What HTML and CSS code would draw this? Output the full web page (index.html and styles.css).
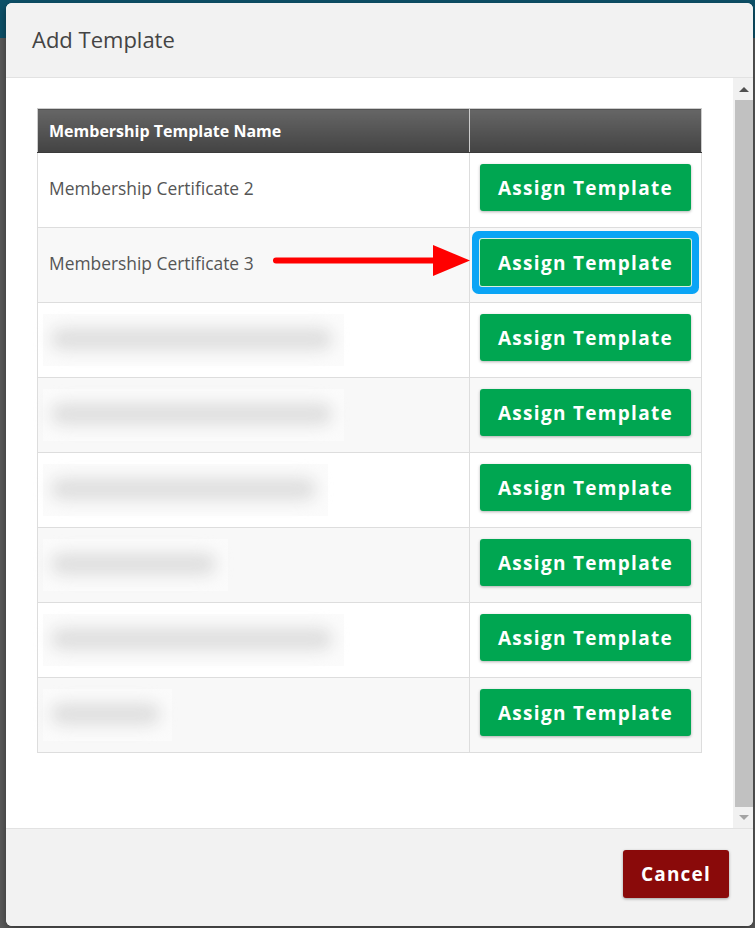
FILE: index.html
```html
<!DOCTYPE html>
<html lang="en">
<head>
    <meta charset="UTF-8">
    <meta name="viewport" content="width=device-width, initial-scale=1.0">
    <title>Add Template</title>
    <link rel="stylesheet" href="styles.css">
</head>
<body>
    <div class="modal">
        <div class="modal-header">
            <h2>Add Template</h2>
        </div>

        <div class="modal-body">
            <div class="modal-content">
                <div class="table-wrap">
                    <table class="template-table">
                        <thead>
                            <tr>
                                <th class="col-name">Membership Template Name</th>
                                <th class="col-action"></th>
                            </tr>
                        </thead>
                        <tbody>
                            <tr>
                                <td>Membership Certificate 2</td>
                                <td class="cell-action"><button class="btn-assign">Assign Template</button></td>
                            </tr>
                            <tr>
                                <td>Membership Certificate 3</td>
                                <td class="cell-action"><button class="btn-assign focused">Assign Template</button></td>
                            </tr>
                            <tr>
                                <td><span class="blurred w-long"><span class="blur-bar"></span></span></td>
                                <td class="cell-action"><button class="btn-assign">Assign Template</button></td>
                            </tr>
                            <tr>
                                <td><span class="blurred w-long"><span class="blur-bar"></span></span></td>
                                <td class="cell-action"><button class="btn-assign">Assign Template</button></td>
                            </tr>
                            <tr>
                                <td><span class="blurred w-mid"><span class="blur-bar"></span></span></td>
                                <td class="cell-action"><button class="btn-assign">Assign Template</button></td>
                            </tr>
                            <tr>
                                <td><span class="blurred w-short"><span class="blur-bar"></span></span></td>
                                <td class="cell-action"><button class="btn-assign">Assign Template</button></td>
                            </tr>
                            <tr>
                                <td><span class="blurred w-long"><span class="blur-bar"></span></span></td>
                                <td class="cell-action"><button class="btn-assign">Assign Template</button></td>
                            </tr>
                            <tr>
                                <td><span class="blurred w-tiny"><span class="blur-bar"></span></span></td>
                                <td class="cell-action"><button class="btn-assign">Assign Template</button></td>
                            </tr>
                        </tbody>
                    </table>

                    <!-- annotation arrow pointing at the focused button -->
                    <svg class="pointer-arrow" width="204" height="36" viewBox="0 0 204 36">
                        <line x1="7" y1="17.5" x2="168" y2="17.5" stroke="#ff0000" stroke-width="6" stroke-linecap="round"/>
                        <polygon points="164,2 201,17.5 164,33" fill="#ff0000"/>
                    </svg>
                </div>
            </div>

            <div class="scrollbar">
                <div class="scroll-btn"><span class="arrow-up"></span></div>
                <div class="scroll-thumb"></div>
                <div class="scroll-btn"><span class="arrow-down"></span></div>
            </div>
        </div>

        <div class="modal-footer">
            <button class="btn-cancel">Cancel</button>
        </div>
    </div>
</body>
</html>
```

FILE: styles.css
```css
:root {
    --backdrop: #5a5a5a;
    --nav: #0d5169;
    --panel: #f2f2f2;
    --line: #e2e2e2;
    --cell-line: #dddddd;
    --green: #00a651;
    --cancel: #8a0a0a;
    --text: #555555;
}

body {
    margin: 0;
    height: 928px;
    overflow: hidden;
    background: linear-gradient(var(--nav) 0, var(--nav) 38px, var(--backdrop) 38px);
    font-family: "Open Sans", "Liberation Sans", Arial, sans-serif;
}

.modal {
    width: 747px;
    height: 923px;
    margin: 3px 0 0 6px;
    background: #ffffff;
    border-radius: 6px;
    overflow: hidden;
    display: flex;
    flex-direction: column;
    box-shadow: 0 3px 8px rgba(0, 0, 0, 0.4);
}

.modal-header {
    height: 74px;
    background: var(--panel);
    border-bottom: 1px solid var(--line);
    display: flex;
    align-items: center;
    padding-left: 26px;
}

.modal-header h2 {
    margin: 0;
    font-size: 22px;
    font-weight: 400;
    color: #444444;
    position: relative;
    top: -1px;
}

.modal-body {
    height: 750px;
    display: flex;
    background: #ffffff;
}

.modal-content {
    flex: 1;
    padding: 30px 0 0 31px;
}

.table-wrap {
    position: relative;
    width: 665px;
}

.template-table {
    width: 665px;
    border-collapse: collapse;
    table-layout: fixed;
}

.template-table th {
    height: 44px;
    padding: 0 11px;
    text-align: left;
    color: #ffffff;
    font-size: 16px;
    font-weight: 700;
    background: linear-gradient(#666666, #434343);
    border: 1px solid #cccccc;
    border-bottom-color: #3a3a3a;
    box-sizing: border-box;
}

.template-table .col-name {
    width: 432px;
}

.template-table td {
    height: 75px;
    padding: 0 10px 4px 11px;
    border: 1px solid var(--cell-line);
    font-size: 17.4px;
    color: var(--text);
    box-sizing: border-box;
}

.template-table td.cell-action {
    padding: 11px 10px 0 10px;
    vertical-align: top;
}

.template-table tbody tr:nth-child(even) td {
    background: #f8f8f8;
}

.btn-assign {
    display: block;
    width: 211px;
    height: 47px;
    border: none;
    border-radius: 3px;
    background: var(--green);
    color: #ffffff;
    font-family: "Open Sans", "Liberation Sans", Arial, sans-serif;
    font-size: 19px;
    font-weight: 700;
    letter-spacing: 1.3px;
    box-shadow: 0 1px 3px rgba(0, 0, 0, 0.3);
    cursor: pointer;
}

.btn-assign.focused {
    box-shadow: 0 0 0 1px #d9efe0, 0 0 0 8px #0aa4f5;
    border-radius: 2px;
}

.blurred {
    display: block;
    height: 52px;
    margin: 4px 0 0 -6px;
    background: #fbfbfb;
    position: relative;
}

.blur-bar {
    display: block;
    position: absolute;
    left: 8px;
    right: 12px;
    top: 14px;
    height: 22px;
    background: #dedede;
    border-radius: 10px;
    filter: blur(8px);
}

.w-long { width: 301px; }
.w-mid { width: 285px; }
.w-short { width: 185px; }
.w-tiny { width: 129px; }

.pointer-arrow {
    position: absolute;
    left: 232px;
    top: 135px;
}

.scrollbar {
    width: 20px;
    background: #f1f1f1;
    display: flex;
    flex-direction: column;
}

.scroll-btn {
    height: 22px;
    display: flex;
    align-items: center;
    justify-content: center;
}

.scroll-btn:last-child {
    height: 21px;
}

.arrow-up {
    width: 0;
    height: 0;
    border-left: 5px solid transparent;
    border-right: 5px solid transparent;
    border-bottom: 5px solid #505050;
    margin-left: 1px;
}

.arrow-down {
    width: 0;
    height: 0;
    border-left: 5px solid transparent;
    border-right: 5px solid transparent;
    border-top: 5px solid #a3a3a3;
    margin-left: 1px;
}

.scroll-thumb {
    flex: 1;
    margin-left: 2px;
    background: #c1c1c1;
}

.modal-footer {
    flex: 1;
    background: var(--panel);
    border-top: 1px solid var(--line);
    display: flex;
    justify-content: flex-end;
    align-items: flex-start;
    padding: 21px 24px 0 0;
}

.btn-cancel {
    width: 106px;
    height: 48px;
    border: none;
    border-radius: 3px;
    background: var(--cancel);
    color: #ffffff;
    font-family: "Open Sans", "Liberation Sans", Arial, sans-serif;
    font-size: 19px;
    font-weight: 700;
    letter-spacing: 1.2px;
    box-shadow: 0 1px 3px rgba(0, 0, 0, 0.35);
    cursor: pointer;
}
```
